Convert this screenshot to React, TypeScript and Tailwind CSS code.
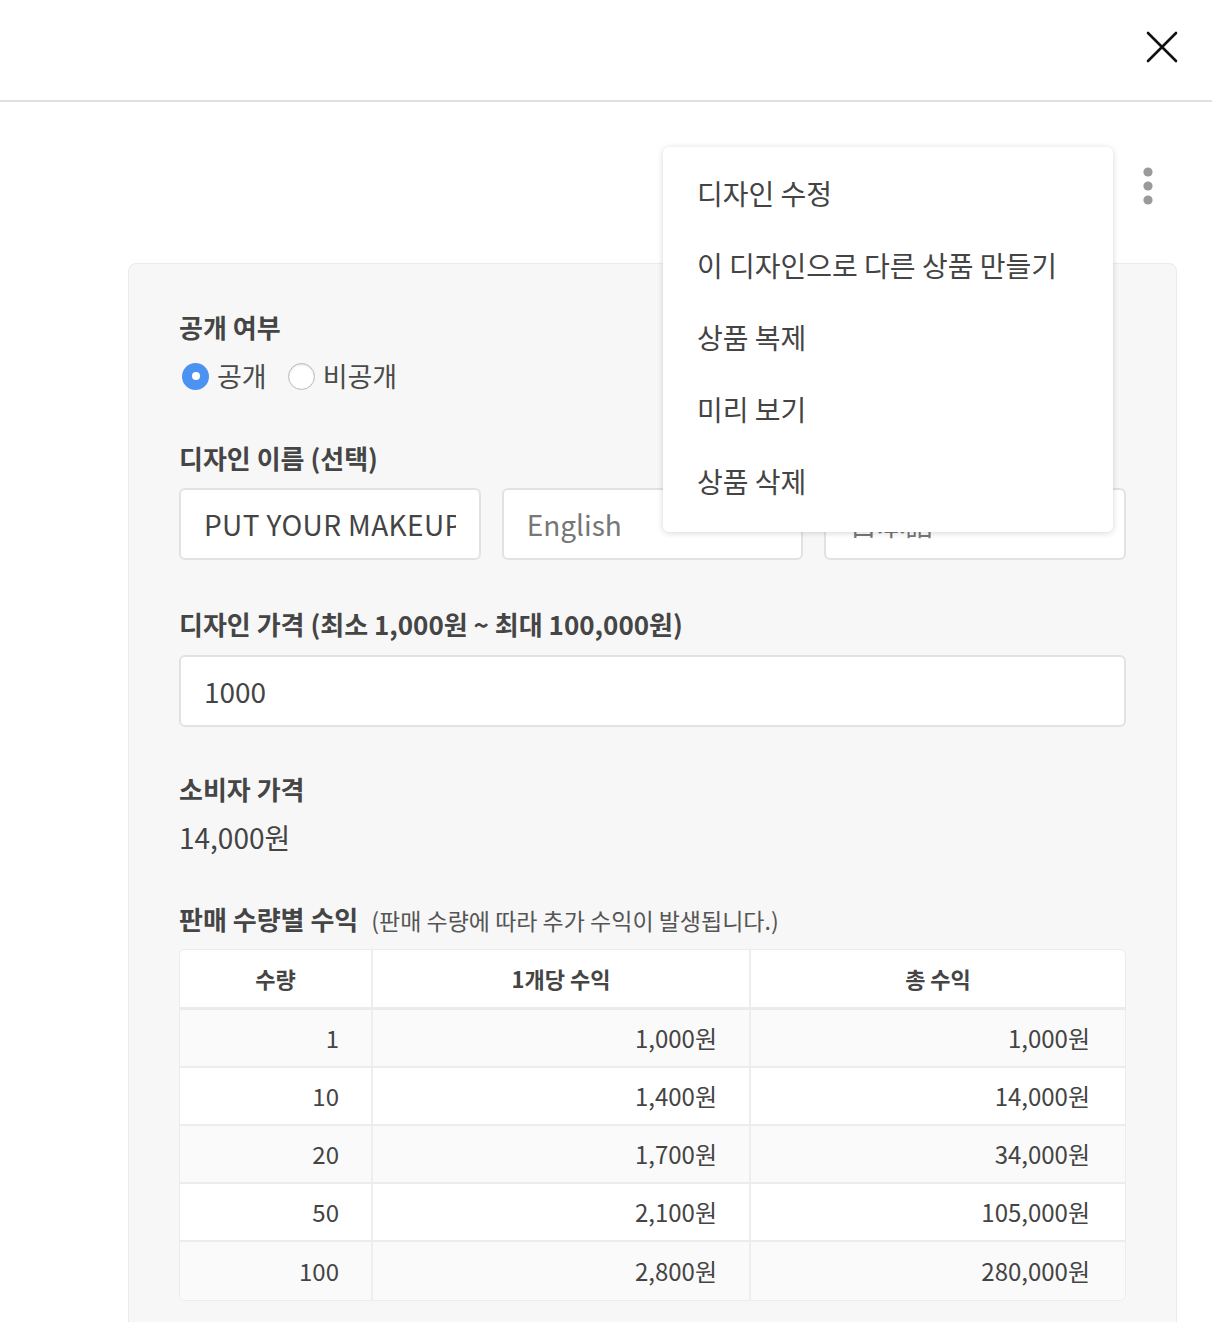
import React from "react";

const FONT = { fontFamily: '"Noto Sans CJK KR", "Noto Sans", sans-serif' };

const MENU = ["디자인 수정", "이 디자인으로 다른 상품 만들기", "상품 복제", "미리 보기", "상품 삭제"];

const ROWS = [
  ["1", "1,000원", "1,000원"],
  ["10", "1,400원", "14,000원"],
  ["20", "1,700원", "34,000원"],
  ["50", "2,100원", "105,000원"],
  ["100", "2,800원", "280,000원"],
];

function Radio({ checked, label }: { checked: boolean; label: string }) {
  return (
    <label className="flex items-center gap-[8px]">
      {checked ? (
        <span className="flex h-[27px] w-[27px] items-center justify-center rounded-full bg-[#4b92f2]">
          <span className="h-[8px] w-[8px] rounded-full bg-white" />
        </span>
      ) : (
        <span className="h-[27px] w-[27px] rounded-full border border-[#b9b9b9] bg-white shadow-[inset_0_1px_2px_rgba(0,0,0,0.12)]" />
      )}
      <span className="text-[27px] leading-[32px] text-[#4a4a4a]">{label}</span>
    </label>
  );
}

function Label({ children }: { children: React.ReactNode }) {
  return <p className="text-[26px] font-bold leading-[32px] text-[#454545]">{children}</p>;
}

const inputCls =
  "h-[72px] w-full rounded-md border-2 border-[#e2e2e2] bg-white px-[23px] text-[28px] text-[#444] outline-none placeholder:text-[#777]";

export default function App() {
  return (
    <div className="relative min-h-screen bg-white" style={FONT}>
      <header className="flex h-[102px] items-center justify-end border-b-2 border-[#e0e0e0] pr-[34px]">
        <svg width="32" height="32" viewBox="0 0 32 32" className="mt-[-6px]">
          <path d="M2 2 L30 30 M30 2 L2 30" stroke="#111" strokeWidth="2.6" strokeLinecap="round" />
        </svg>
      </header>

      <div className="flex h-[161px] justify-end">
        <svg width="10" height="38" viewBox="0 0 10 38" className="mr-[59px] mt-[65px]">
          <circle cx="5" cy="5" r="4.6" fill="#9a9a9a" />
          <circle cx="5" cy="19" r="4.6" fill="#9a9a9a" />
          <circle cx="5" cy="33" r="4.6" fill="#9a9a9a" />
        </svg>
      </div>

      <div className="absolute left-[663px] top-[147px] w-[450px] rounded-md bg-white pb-[15px] pt-[10px] shadow-[0_1px_6px_rgba(0,0,0,0.16)]">
        {MENU.map((m) => (
          <div key={m} className="flex h-[72px] items-center px-[34px] text-[28px] text-[#444]">
            {m}
          </div>
        ))}
      </div>

      <section className="ml-[128px] mr-[35px] rounded-lg border border-[#ebebeb] bg-[#f7f7f7] px-[50px] pb-[30px] pt-[47px]">
        <Label>공개 여부</Label>
        <div className="mt-[17px] flex h-[32px] items-center gap-[21px] pl-[3px]">
          <Radio checked label="공개" />
          <Radio checked={false} label="비공개" />
        </div>

        <div className="mt-[50px]">
          <Label>디자인 이름 (선택)</Label>
        </div>
        <div className="mt-[14px] grid grid-cols-3 gap-[21px]">
          <input className={`${inputCls} tracking-[0.4px]`} defaultValue="PUT YOUR MAKEUP ON" readOnly />
          <input className={inputCls} placeholder="English" readOnly />
          <input className={inputCls} placeholder="日本語" readOnly />
        </div>

        <div className="mt-[48px]">
          <Label>디자인 가격 (최소 1,000원 ~ 최대 100,000원)</Label>
        </div>
        <input className={`${inputCls} mt-[15px] h-[70px]`} defaultValue="1000" readOnly />

        <div className="mt-[46px]">
          <Label>소비자 가격</Label>
        </div>
        <p className="mt-[14px] text-[28px] leading-[36px] text-[#444]">14,000원</p>

        <div className="mt-[48px] flex items-baseline gap-[13px]">
          <Label>판매 수량별 수익</Label>
          <span className="text-[23px] text-[#555]">(판매 수량에 따라 추가 수익이 발생됩니다.)</span>
        </div>

        <div className="mt-[11px] overflow-hidden rounded-md border border-[#ececec] bg-white">
          <div className="grid h-[60px] grid-cols-[193px_378px_1fr] border-b-[3px] border-[#ebebeb] text-[22px] font-bold text-[#454545]">
            <div className="flex items-center justify-center border-r-2 border-[#eeeeee]">수량</div>
            <div className="flex items-center justify-center border-r-2 border-[#eeeeee]">1개당 수익</div>
            <div className="flex items-center justify-center">총 수익</div>
          </div>
          {ROWS.map((r, i) => (
            <div
              key={r[0]}
              className={`grid h-[58px] grid-cols-[193px_378px_1fr] text-[24px] text-[#444] ${
                i % 2 === 0 ? "bg-[#fafafa]" : "bg-white"
              } ${i < ROWS.length - 1 ? "border-b-2 border-[#ececec]" : "h-[56px]"}`}
            >
              <div className="flex items-center justify-end border-r-2 border-[#eeeeee] pr-[32px]">{r[0]}</div>
              <div className="flex items-center justify-end border-r-2 border-[#eeeeee] pr-[32px]">{r[1]}</div>
              <div className="flex items-center justify-end pr-[35px]">{r[2]}</div>
            </div>
          ))}
        </div>
      </section>
    </div>
  );
}
